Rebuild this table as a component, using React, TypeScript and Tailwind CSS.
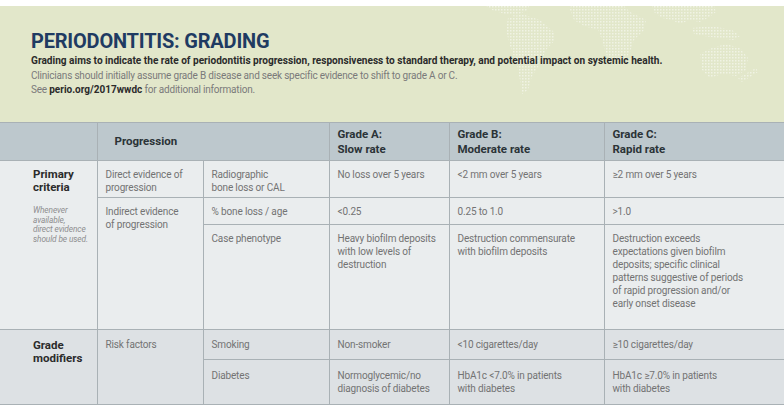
import React from "react";

const font = { fontFamily: "Roboto, 'Noto Sans', sans-serif" };

function WorldMap() {
  return (
    <svg
      className="absolute left-0 top-0 pointer-events-none"
      width="784"
      height="122"
      viewBox="0 0 784 122"
    >
      <defs>
        <pattern id="dots" width="3" height="3" patternUnits="userSpaceOnUse">
          <rect x="0" y="0" width="1.5" height="1.5" fill="#ffffff" />
        </pattern>
      </defs>
      <g fill="url(#dots)" opacity="0.5">
        <path d="M478 -6 L530 -6 L528 4 L515 10 L505 8 L492 4 Z" />
        <path d="M508 12 L522 8 L540 14 L554 26 L555 34 L546 44 L540 58 L532 70 L528 84 L522 88 L520 74 L516 56 L510 40 L506 24 Z" />
        <path d="M572 -6 L618 -6 L630 6 L646 14 L644 24 L634 34 L630 46 L622 58 L614 60 L606 48 L602 34 L598 24 L584 20 L574 14 L570 4 Z" />
        <path d="M650 -6 L712 -6 L716 6 L708 12 L700 16 L690 14 L680 18 L672 14 L662 12 L654 6 Z" />
        <path d="M692 22 L712 20 L732 24 L740 30 L734 34 L718 32 L704 30 L694 28 Z" />
        <path d="M700 48 L712 42 L726 38 L740 42 L748 52 L746 64 L736 70 L722 68 L710 72 L702 64 Z" />
        <path d="M738 72 L756 62 L758 66 L742 76 Z" />
      </g>
    </svg>
  );
}

const td =
  "border-[#a9b1b5] border-[1.5px] align-top pl-2 pr-1 pt-[7px] text-[10px] leading-[13px] tracking-[-0.15px] text-[#737373]";

export default function App() {
  return (
    <div className="w-[784px] h-[410px] bg-white overflow-hidden" style={font}>
      <div className="h-[6px] bg-white" />
      <div className="relative h-[116px] bg-[#e2e7ca] pl-[31px] pt-[23px]">
        <WorldMap />
        <div className="relative">
          <div className="text-[20px] leading-[24px] font-bold text-[#1f3b62] tracking-[-0.2px]">
            PERIODONTITIS: GRADING
          </div>
          <div className="text-[10.1px] leading-[14px] font-bold text-[#2b2b2b] mt-[1px]">
            Grading aims to indicate the rate of periodontitis progression, responsiveness to standard therapy, and potential impact on systemic health.
          </div>
          <div className="text-[10px] leading-[14px] tracking-[-0.2px] text-[#7a7a7a] mt-[1px]">
            Clinicians should initially assume grade B disease and seek specific evidence to shift to grade A or C.
          </div>
          <div className="text-[10px] leading-[14px] tracking-[-0.2px] text-[#7a7a7a]">
            See <span className="font-bold text-[#2b2b2b] tracking-normal">perio.org/2017wwdc</span> for additional information.
          </div>
        </div>
      </div>
      <table className="border-collapse table-fixed w-[784px] border-t-[1.5px] border-[#a9b1b5]">
        <colgroup>
          <col className="w-[97px]" />
          <col className="w-[106px]" />
          <col className="w-[126px]" />
          <col className="w-[120px]" />
          <col className="w-[155px]" />
          <col className="w-[180px]" />
        </colgroup>
        <thead>
          <tr className="h-[38px] bg-[#bdc8cd] text-[#2b3337] text-[11.5px] leading-[15px] font-bold">
            <th className="border-[#a9b1b5] border-[1.5px] border-l-0 border-t-0" />
            <th colSpan={2} className="border-[#a9b1b5] border-[1.5px] border-t-0 text-left pl-[17px] align-middle">
              Progression
            </th>
            <th className="border-[#a9b1b5] border-[1.5px] border-t-0 text-left px-2 align-middle">
              Grade A:<br />Slow rate
            </th>
            <th className="border-[#a9b1b5] border-[1.5px] border-t-0 text-left px-2 align-middle">
              Grade B:<br />Moderate rate
            </th>
            <th className="border-[#a9b1b5] border-[1.5px] border-t-0 border-r-0 text-left px-2 align-middle">
              Grade C:<br />Rapid rate
            </th>
          </tr>
        </thead>
        <tbody className="bg-[#eaedee]">
          <tr className="h-[37px]">
            <td rowSpan={3} className={`${td} border-l-0 pl-[33px] pr-1 pt-[7px]`}>
              <div className="text-[11.5px] leading-[13px] font-bold text-[#2b2b2b] tracking-normal">
                Primary
                <br />
                criteria
              </div>
              <div className="mt-[12px] text-[8.3px] leading-[9.7px] italic text-[#8e8e8e] tracking-[-0.1px]">
                Whenever
                <br />
                available,
                <br />
                direct evidence
                <br />
                should be used.
              </div>
            </td>
            <td className={`${td} pt-[6px]`}>Direct evidence of progression</td>
            <td className={`${td} pt-[6px]`}>
              Radiographic
              <br />
              bone loss or CAL
            </td>
            <td className={`${td} pt-[6px]`}>No loss over 5 years</td>
            <td className={`${td} pt-[6px]`}>&lt;2 mm over 5 years</td>
            <td className={`${td} pt-[6px] border-r-0`}>≥2 mm over 5 years</td>
          </tr>
          <tr className="h-[27px]">
            <td rowSpan={2} className={td}>
              Indirect evidence
              <br />
              of progression
            </td>
            <td className={td}>% bone loss / age</td>
            <td className={td}>&lt;0.25</td>
            <td className={td}>0.25 to 1.0</td>
            <td className={`${td} border-r-0`}>&gt;1.0</td>
          </tr>
          <tr className="h-[105px]">
            <td className={td}>Case phenotype</td>
            <td className={td}>
              Heavy biofilm deposits
              <br />
              with low levels of
              <br />
              destruction
            </td>
            <td className={td}>
              Destruction commensurate
              <br />
              with biofilm deposits
            </td>
            <td className={`${td} border-r-0`}>
              Destruction exceeds
              <br />
              expectations given biofilm
              <br />
              deposits; specific clinical
              <br />
              patterns suggestive of periods
              <br />
              of rapid progression and/or
              <br />
              early onset disease
            </td>
          </tr>
        </tbody>
        <tbody className="bg-[#dde1e4]">
          <tr className="h-[30px]">
            <td rowSpan={2} className={`${td} border-l-0 pl-[33px] pr-1 pt-[9px]`}>
              <div className="text-[11.5px] leading-[13px] font-bold text-[#2b2b2b] tracking-normal">
                Grade
                <br />
                modifiers
              </div>
            </td>
            <td rowSpan={2} className={`${td} pt-[8px]`}>Risk factors</td>
            <td className={`${td} pt-[8px]`}>Smoking</td>
            <td className={`${td} pt-[8px]`}>Non-smoker</td>
            <td className={`${td} pt-[8px]`}>&lt;10 cigarettes/day</td>
            <td className={`${td} border-r-0 pt-[8px]`}>≥10 cigarettes/day</td>
          </tr>
          <tr className="h-[45px]">
            <td className={`${td} pt-[9px]`}>Diabetes</td>
            <td className={`${td} pt-[9px]`}>
              Normoglycemic/no
              <br />
              diagnosis of diabetes
            </td>
            <td className={`${td} pt-[9px]`}>
              HbA1c &lt;7.0% in patients
              <br />
              with diabetes
            </td>
            <td className={`${td} border-r-0 pt-[9px]`}>
              HbA1c ≥7.0% in patients
              <br />
              with diabetes
            </td>
          </tr>
        </tbody>
      </table>
    </div>
  );
}
